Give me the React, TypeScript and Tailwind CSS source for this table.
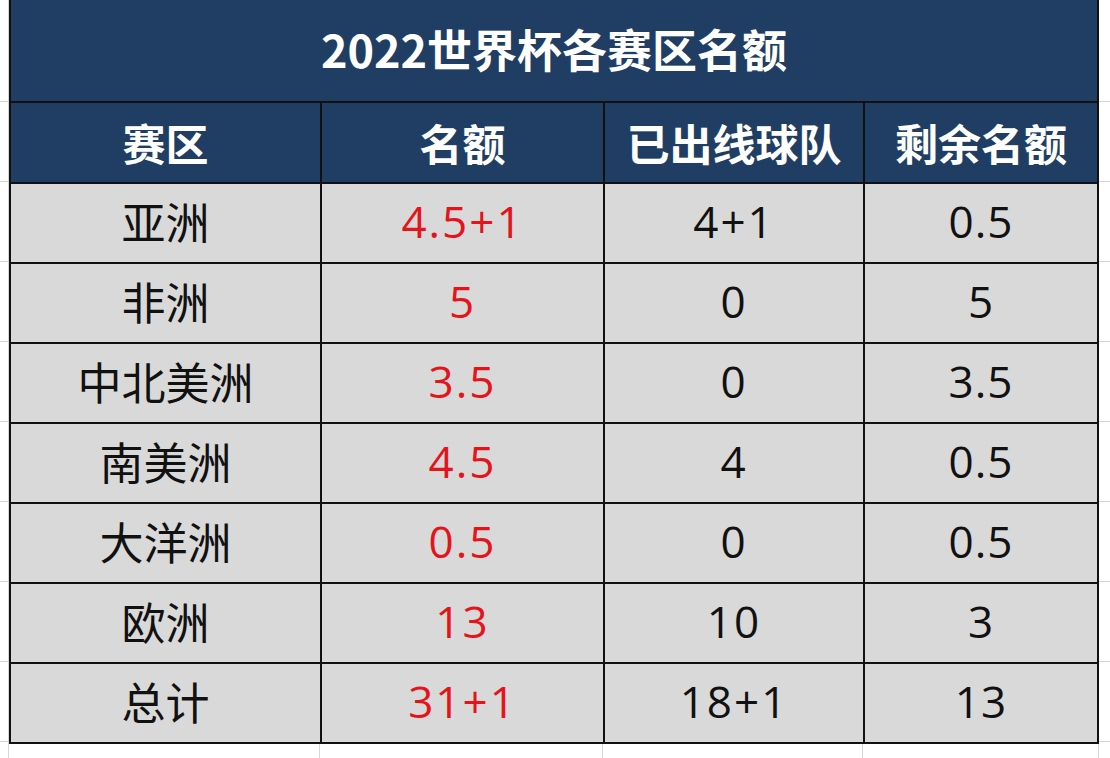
const rows = [
  { region: "亚洲", quota: "4.5+1", qualified: "4+1", left: "0.5" },
  { region: "非洲", quota: "5", qualified: "0", left: "5" },
  { region: "中北美洲", quota: "3.5", qualified: "0", left: "3.5" },
  { region: "南美洲", quota: "4.5", qualified: "4", left: "0.5" },
  { region: "大洋洲", quota: "0.5", qualified: "0", left: "0.5" },
  { region: "欧洲", quota: "13", qualified: "10", left: "3" },
  { region: "总计", quota: "31+1", qualified: "18+1", left: "13" },
];

const headers = ["赛区", "名额", "已出线球队", "剩余名额"];

// faint excel gridlines around the table
function Gutter({ width }: { width: string }) {
  return (
    <div className={`flex flex-col ${width}`}>
      <div className="h-[102px] border-b border-[#d6d6d6]" />
      <div className="h-[80px] border-b border-[#d6d6d6]" />
      {rows.map((r) => (
        <div key={r.region} className="h-[80px] border-b border-[#d6d6d6]" />
      ))}
    </div>
  );
}

export default function App() {
  const cjk = { fontFamily: '"Noto Sans CJK SC", "Noto Sans", sans-serif' };
  const body = { fontFamily: '"Open Sans", "Noto Sans CJK SC", sans-serif' };
  const cell = "flex h-[78px] items-center justify-center bg-[#d9d9d9] pb-[5px] leading-none";

  return (
    <div className="flex h-[758px] w-[1110px] overflow-hidden bg-white">
      <Gutter width="w-[9px] border-r border-[#d6d6d6]" />
      <div className="flex flex-col">
        <div className="grid grid-cols-[309px_281px_258px_232px] gap-[2px] bg-[#111] px-[2px] pb-[2px]">
          <div
            className="col-span-4 flex h-[101px] items-center justify-center bg-[#203e63] pb-1 text-[45px] font-bold leading-none text-white"
            style={cjk}
          >
            2022世界杯各赛区名额
          </div>
          {headers.map((h) => (
            <div
              key={h}
              className="flex h-[79px] items-center justify-center bg-[#203e63] text-[43px] font-bold leading-none text-white"
              style={cjk}
            >
              {h}
            </div>
          ))}
          {rows.map((r) => (
            <div key={r.region} className="contents">
              <div className={`${cell} text-[44px] text-[#111]`} style={cjk}>
                {r.region}
              </div>
              <div className={`${cell} text-[44px] tracking-[2px] text-[#e5141b]`} style={body}>
                {r.quota}
              </div>
              <div className={`${cell} text-[44px] tracking-[2px] text-[#111]`} style={body}>
                {r.qualified}
              </div>
              <div className={`${cell} text-[44px] tracking-[1px] text-[#111]`} style={body}>
                {r.left}
              </div>
            </div>
          ))}
        </div>
        <div className="grid flex-1 grid-cols-[311px_283px_260px_236px]">
          <div className="border-r border-[#d6d6d6]" />
          <div className="border-r border-[#d6d6d6]" />
          <div className="border-r border-[#d6d6d6]" />
          <div className="border-r border-[#d6d6d6]" />
        </div>
      </div>
      <Gutter width="flex-1" />
    </div>
  );
}
